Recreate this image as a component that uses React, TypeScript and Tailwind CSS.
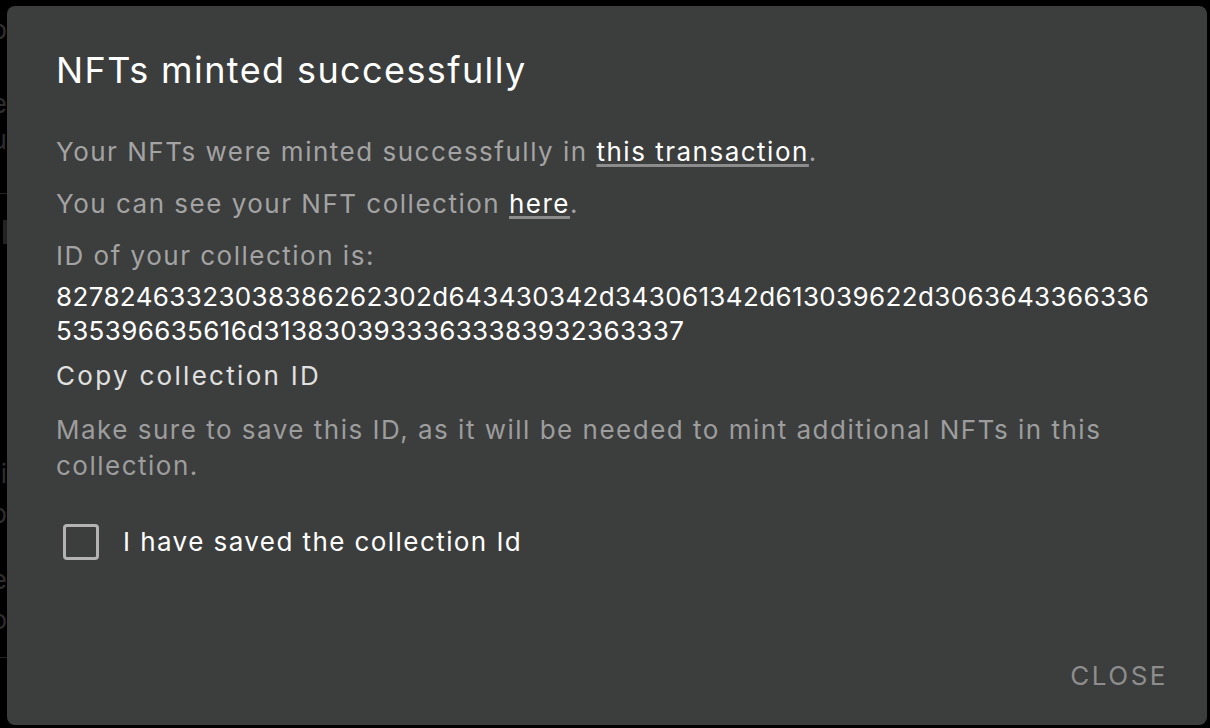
import React from "react";

const font = { fontFamily: "Inter, 'Noto Sans', sans-serif" };

function Strip() {
  return (
    <div className="w-[7px] shrink-0 overflow-hidden flex flex-col text-[#3a3a3a]" style={font}>
      <div className="flex flex-col">
        <div className="h-[12px]" />
        <div className="h-[36px] flex justify-end text-[26px] leading-[36px] whitespace-nowrap">ap</div>
        <div className="h-[38px]" />
        <div className="h-[36px] flex justify-end text-[26px] leading-[36px] whitespace-nowrap">re</div>
        <div className="h-[44px] flex justify-end text-[26px] leading-[36px] whitespace-nowrap">au</div>
        <div className="h-[28px] border-b border-[#2e2e2e]" />
        <div className="h-[26px]" />
        <div className="h-[24px] w-[4px] ml-[3px] bg-[#2e2e2e]" />
        <div className="h-[212px]" />
        <div className="h-[40px] flex justify-end text-[26px] leading-[36px] whitespace-nowrap">ai</div>
        <div className="h-[36px] flex justify-end text-[26px] leading-[36px] whitespace-nowrap">ap</div>
        <div className="h-[30px]" />
        <div className="h-[40px] flex justify-end text-[26px] leading-[36px] whitespace-nowrap">re</div>
        <div className="h-[36px] flex justify-end text-[26px] leading-[36px] whitespace-nowrap">ao</div>
        <div className="h-[20px] border-b border-[#2e2e2e]" />
      </div>
    </div>
  );
}

export default function App() {
  return (
    <div className="w-[1210px] h-[728px] bg-black flex flex-row overflow-hidden" style={font}>
      <Strip />
      <div className="pt-[6px]">
        <div className="w-[1200px] h-[719px] bg-[#3c3d3d] rounded-[8px] flex flex-col pl-[49px] pr-[48px] pt-[42px] pb-[31px] shadow-[0_10px_30px_rgba(0,0,0,0.5)]">
          <h2 className="text-[36px] leading-[44px] text-white font-normal tracking-[1.4px]">NFTs minted successfully</h2>
          <p className="mt-[42px] text-[26px] leading-[36px] text-[#a3a3a3] tracking-[1.5px]">
            Your NFTs were minted successfully in{" "}
            <a className="text-white underline decoration-[3px] underline-offset-[3px] decoration-[#8c8c8c]">this transaction</a>.
          </p>
          <p className="mt-[16px] text-[26px] leading-[36px] text-[#a3a3a3] tracking-[1.5px]">
            You can see your NFT collection{" "}
            <a className="text-white underline decoration-[3px] underline-offset-[3px] decoration-[#8c8c8c]">here</a>.
          </p>
          <p className="mt-[16px] text-[26px] leading-[36px] text-[#a3a3a3] tracking-[1.5px]">ID of your collection is:</p>
          <div className="mt-[6px] text-[26px] leading-[34px] text-white flex flex-col tracking-[0.37px] whitespace-nowrap">
            <span>82782463323038386262302d643430342d343061342d613039622d3063643366336</span>
            <span>535396635616d31383039333633383932363337</span>
          </div>
          <div className="mt-[10px] text-[26px] leading-[36px] text-[#e0e0e0] tracking-[2.3px]">Copy collection ID</div>
          <p className="mt-[18px] text-[26px] leading-[36px] text-[#9d9d9d] tracking-[1.5px]">
            Make sure to save this ID, as it will be needed to mint additional NFTs in this collection.
          </p>
          <label className="mt-[40px] flex flex-row items-center pl-[7px]">
            <span className="w-[36px] h-[36px] border-[3px] border-[#b3b3b3] rounded-[4px]" />
            <span className="ml-[24px] text-[26px] leading-[36px] text-white tracking-[1.43px]">I have saved the collection Id</span>
          </label>
          <div className="mt-auto flex flex-row justify-end">
            <button className="text-[26px] leading-[36px] text-[#8d8d8d] tracking-[2.5px] mr-[-9px]">CLOSE</button>
          </div>
        </div>
      </div>
    </div>
  );
}
